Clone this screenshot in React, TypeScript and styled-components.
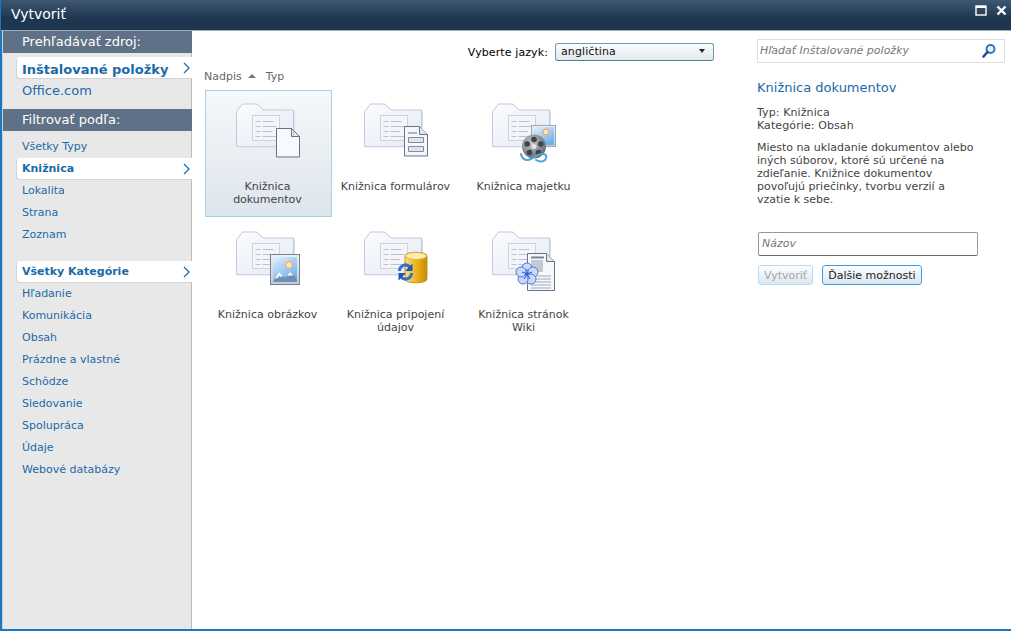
import React from "react";
import styled, { createGlobalStyle } from "styled-components";

const GlobalStyle = createGlobalStyle`
  html, body {
    margin: 0;
    padding: 0;
    height: 100%;
    overflow: hidden;
    background: #fff;
    font-family: "DejaVu Sans", Verdana, sans-serif;
    font-size: 11px;
  }
`;

type OverlayKind = "document" | "form" | "asset" | "picture" | "data" | "wiki";

interface Template {
  name: string[];
  overlay: OverlayKind;
  selected?: boolean;
}

const templates: Template[] = [
  { name: ["Knižnica", "dokumentov"], overlay: "document", selected: true },
  { name: ["Knižnica formulárov"], overlay: "form" },
  { name: ["Knižnica majetku"], overlay: "asset" },
  { name: ["Knižnica obrázkov"], overlay: "picture" },
  { name: ["Knižnica pripojení", "údajov"], overlay: "data" },
  { name: ["Knižnica stránok", "Wiki"], overlay: "wiki" },
];

const typeFilters = ["Lokalita", "Strana", "Zoznam"];
const categories = [
  "Hľadanie",
  "Komunikácia",
  "Obsah",
  "Prázdne a vlastné",
  "Schôdze",
  "Sledovanie",
  "Spolupráca",
  "Údaje",
  "Webové databázy",
];

const Defs = () => (
  <svg width="0" height="0" style={{ position: "absolute" }}>
    <defs>
      <linearGradient id="folderFill" x1="0" y1="0" x2="1" y2="1">
        <stop offset="0" stopColor="#fbfcfe" />
        <stop offset="1" stopColor="#e3e9f6" />
      </linearGradient>
      <linearGradient id="skyFill" x1="0" y1="0" x2="0.6" y2="1">
        <stop offset="0" stopColor="#e3f1fc" />
        <stop offset="1" stopColor="#6fb0ec" />
      </linearGradient>
      <linearGradient id="frameFill" x1="0" y1="0" x2="0" y2="1">
        <stop offset="0" stopColor="#eef1f5" />
        <stop offset="1" stopColor="#c3ccd6" />
      </linearGradient>
      <linearGradient id="goldFill" x1="0" y1="0" x2="1" y2="0">
        <stop offset="0" stopColor="#fce27a" />
        <stop offset="0.55" stopColor="#ecb017" />
        <stop offset="1" stopColor="#c48b0a" />
      </linearGradient>
      <radialGradient id="reelFill" cx="0.4" cy="0.35" r="0.7">
        <stop offset="0" stopColor="#c4c7ca" />
        <stop offset="1" stopColor="#63676b" />
      </radialGradient>
    </defs>
  </svg>
);

const PaperLines = ({ x, y }: { x: number; y: number }) => (
  <g stroke="#b9c3d0" strokeWidth="1">
    <path d={`M${x} ${y}h5M${x} ${y + 5}h5M${x} ${y + 10}h5M${x} ${y + 15}h5`} />
    <path d={`M${x + 7} ${y}h11M${x + 7} ${y + 5}h14M${x + 7} ${y + 10}h9M${x + 7} ${y + 15}h14`} />
  </g>
);

const Overlay = ({ kind }: { kind: OverlayKind }) => {
  switch (kind) {
    case "document":
      return (
        <path
          d="M40.5 25.5h15l8 8v20.5h-23z M55.5 25.5v8h8"
          fill="#f7f9fc"
          stroke="#62758a"
          strokeLinejoin="round"
        />
      );
    case "form":
      return (
        <g>
          <path d="M40.5 23.5h15l8 8v21.5h-23z" fill="#f4f6f9" stroke="#62758a" />
          <path d="M55.5 23.5v8h8" fill="#dfe5ec" stroke="#62758a" />
          <path d="M44 30h9" stroke="#62758a" />
          <path d="M44.5 34.5h15v5h-15zM44.5 43.5h15v5h-15z" fill="#dfe4ea" stroke="#7c8ea2" />
        </g>
      );
    case "asset":
      return (
        <g>
          <rect x="39.5" y="22.5" width="24" height="21" fill="url(#frameFill)" stroke="#9aa9ba" />
          <rect x="41" y="24" width="21" height="18" fill="url(#skyFill)" />
          <circle cx="54" cy="29" r="3" fill="#fbe3bd" stroke="#ee9a5b" />
          <circle cx="42" cy="43.5" r="12" fill="url(#reelFill)" />
          <circle cx="42" cy="43.5" r="2.5" fill="#e2e4e6" />
          <g fill="#3f4347">
            <circle cx="42" cy="36.5" r="2.8" />
            <circle cx="48.8" cy="41" r="2.8" />
            <circle cx="46.5" cy="49.5" r="2.8" />
            <circle cx="37.5" cy="49.5" r="2.8" />
            <circle cx="35.2" cy="41" r="2.8" />
          </g>
          <path
            d="M29 51c1 6 6 7 10 5s8-6 12-5c4 0 4 4 2 6s-6 2-9 0"
            fill="none"
            stroke="#4ea3d8"
            strokeWidth="2"
            strokeLinecap="round"
          />
        </g>
      );
    case "picture":
      return (
        <g>
          <rect x="34.5" y="23.5" width="29" height="30" fill="url(#frameFill)" stroke="#6f8195" />
          <rect x="37" y="26" width="24" height="25" fill="url(#skyFill)" />
          <circle cx="53" cy="34" r="3.5" fill="#fbe3bd" stroke="#ef9d5f" />
          <path d="M37 51l6-10 6 6 5-6 7 7v3z" fill="#6f8fb4" />
          <path d="M39 47.5l4-6.5 4 4-2 1-2-1-1 2zM51 44.5l3-3.500 3 3-2 1-1-1-1 1z" fill="#f4f7fb" />
        </g>
      );
    case "data":
      return (
        <g>
          <path d="M41 25c0-5 22-5 22 0v23c0 5-22 5-22 0z" fill="url(#goldFill)" stroke="#c2952a" />
          <ellipse cx="52" cy="25" rx="10.500" ry="3.500" fill="#fdeeb0" stroke="#e0b23a" />
          <g fill="none" stroke="#2f6fd0" strokeWidth="3">
            <path d="M35.500 40a6 6 0 0 1 10.500-4" />
            <path d="M47.500 42a6 6 0 0 1-10.500 4" />
          </g>
          <path d="M48.500 32.500v7.500h-7.500zM34.500 49.500v-7.500h7.500z" fill="#1f57b4" />
        </g>
      );
    case "wiki":
      return (
        <g>
          <path d="M35.5 22.5h19l8 8v29h-27z" fill="#f6f8fb" stroke="#62758a" />
          <path d="M54.5 22.5v8h8" fill="#dfe5ec" stroke="#62758a" />
          <path d="M39 26.5h13" stroke="#75879a" strokeWidth="2" />
          <rect x="39" y="29" width="12" height="12" fill="#c4cad1" />
          <path d="M44 45h15M44 48h15M39 51h20M39 54h20M39 57h20" stroke="#9aa8b8" />
          <g fill="#c9daf9" stroke="#4a78de" strokeWidth="1">
            <circle cx="35" cy="37" r="5" />
            <circle cx="41" cy="41" r="5" />
            <circle cx="39" cy="48" r="5" />
            <circle cx="31" cy="48" r="5" />
            <circle cx="29" cy="41" r="5" />
          </g>
          <path d="M35 38v5M40 41l-5 2M38 48l-3-5M32 48l3-5M30 41l5 2" stroke="#2a58c8" />
        </g>
      );
  }
};

const LibraryIcon = ({ kind }: { kind: OverlayKind }) => (
  <IconSvg width="64" height="64" viewBox="0 0 64 64">
    <path
      d="M0.5 8.500l6-7.500h14.500l6 6h30.500v36.500h-57z"
      fill="url(#folderFill)"
      stroke="#c2c9d6"
    />
    <path d="M58.500 8v36H2" fill="none" stroke="#dde1e8" />
    <rect x="16.5" y="12.5" width="27" height="25" fill="#f3f5f9" stroke="#ccd3dd" />
    <PaperLines x={19.5} y={18.5} />
    <Overlay kind={kind} />
  </IconSvg>
);

const App: React.FC = () => (
  <>
    <GlobalStyle />
    <Defs />
    <Dialog>
      <TitleBar>
        <Title>Vytvoriť</Title>
        <WindowControls>
          <svg width="13" height="12" viewBox="0 0 13 12">
            <rect x="1" y="1" width="10" height="9" fill="none" stroke="#fff" strokeWidth="1.4" />
            <path d="M1 2h10" stroke="#fff" strokeWidth="2" />
          </svg>
          <svg width="11" height="11" viewBox="0 0 11 11">
            <path d="M1.5 1.5l8 8M9.5 1.5l-8 8" stroke="#fff" strokeWidth="2.4" />
          </svg>
        </WindowControls>
      </TitleBar>
      <Body>
        <Sidebar>
          <SectionHeading>Prehľadávať zdroj:</SectionHeading>
          <SourceList>
            <SourceItem $active>
              Inštalované položky
              <Chevron />
            </SourceItem>
            <SourceItem>Office.com</SourceItem>
          </SourceList>
          <SectionHeading>Filtrovať podľa:</SectionHeading>
          <FilterList>
            <FilterItem>Všetky Typy</FilterItem>
            <FilterItem $active>
              Knižnica
              <Chevron />
            </FilterItem>
            {typeFilters.map((f) => (
              <FilterItem key={f}>{f}</FilterItem>
            ))}
          </FilterList>
          <FilterList $second>
            <FilterItem $active>
              Všetky Kategórie
              <Chevron />
            </FilterItem>
            {categories.map((c) => (
              <FilterItem key={c}>{c}</FilterItem>
            ))}
          </FilterList>
        </Sidebar>

        <Main>
          <LanguageRow>
            Vyberte jazyk:
            <LanguageSelect>
              angličtina
              <SelectArrow />
            </LanguageSelect>
          </LanguageRow>
          <SortRow>
            <span>Nadpis</span>
            <SortArrow />
            <span>Typ</span>
          </SortRow>
          <TileGrid>
            {templates.map((t) => (
              <Tile key={t.overlay} $selected={t.selected}>
                <LibraryIcon kind={t.overlay} />
                <TileLabel>
                  {t.name.map((line) => (
                    <div key={line}>{line}</div>
                  ))}
                </TileLabel>
              </Tile>
            ))}
          </TileGrid>
        </Main>

        <Details>
          <SearchBox>
            <SearchInput placeholder="Hľadať Inštalované položky" />
            <svg width="16" height="16" viewBox="0 0 16 16">
              <circle cx="9.5" cy="6" r="4" fill="#e8f2fb" stroke="#2f76bd" strokeWidth="2" />
              <path d="M6.5 9l-4 4.5" stroke="#1d4f8d" strokeWidth="2.6" strokeLinecap="round" />
            </svg>
          </SearchBox>
          <DetailTitle>Knižnica dokumentov</DetailTitle>
          <MetaLine>Typ: Knižnica</MetaLine>
          <MetaLine>Kategórie: Obsah</MetaLine>
          <Description>
            Miesto na ukladanie dokumentov alebo
            <br />
            iných súborov, ktoré sú určené na
            <br />
            zdieľanie. Knižnice dokumentov
            <br />
            povoľujú priečinky, tvorbu verzií a
            <br />
            vzatie k sebe.
          </Description>
          <NameInput placeholder="Názov" />
          <ButtonRow>
            <ActionButton disabled>Vytvoriť</ActionButton>
            <ActionButton>Ďalšie možnosti</ActionButton>
          </ButtonRow>
        </Details>
      </Body>
    </Dialog>
  </>
);

const Chevron = () => (
  <ChevronIcon width="7" height="12" viewBox="0 0 7 12">
    <path d="M1 1l5 5-5 5" fill="none" stroke="#1f6fae" strokeWidth="1.3" />
  </ChevronIcon>
);

const Dialog = styled.div`
  display: flex;
  flex-direction: column;
  height: 631px;
  box-sizing: border-box;
  border-left: 2px solid #1b78c0;
  border-bottom: 2px solid #1b78c0;
`;
const TitleBar = styled.div`
  display: flex;
  align-items: center;
  justify-content: space-between;
  flex: 0 0 31px;
  box-sizing: border-box;
  margin-left: -1px;
  padding: 0 4px 2px 10px;
  background: linear-gradient(#3f5872, #1f3650 60%, #1e354e);
  border-bottom: 1px solid #9fb0bd;
`;
const Title = styled.div`
  color: #fff;
  font-size: 14px;
`;
const WindowControls = styled.div`
  display: flex;
  align-items: center;
  gap: 8px;
  margin-bottom: 7px;
`;
const Body = styled.div`
  display: flex;
  flex: 1;
  min-height: 0;
`;
const Sidebar = styled.div`
  flex: 0 0 190px;
  box-sizing: border-box;
  border-left: 1px solid #cfcfcf;
  border-right: 1px solid #bcbcbc;
  background: #e8e8e8;
`;
const SectionHeading = styled.div`
  height: 22px;
  line-height: 22px;
  padding-left: 19px;
  margin-right: -1px;
  background: #5f7186;
  color: #fff;
  font-size: 13px;
`;
const SourceList = styled.div`
  padding: 4px 0 10px;
`;
const SourceItem = styled.div<{ $active?: boolean }>`
  position: relative;
  height: 21px;
  line-height: 25px;
  margin-left: 14px;
  padding-left: 5px;
  margin-right: -1px;
  font-size: 13px;
  color: #1a6aa8;
  font-weight: ${(p) => (p.$active ? 700 : 400)};
  background: ${(p) => (p.$active ? "#fff" : "transparent")};
  border-radius: 3px 0 0 3px;
  box-shadow: ${(p) => (p.$active ? "-1px 1px 0 #d4d4d4" : "none")};
`;
const FilterList = styled.div<{ $second?: boolean }>`
  padding-top: ${(p) => (p.$second ? "15px" : "5px")};
`;
const FilterItem = styled.div<{ $active?: boolean }>`
  position: relative;
  height: ${(p) => (p.$active ? "21px" : "22px")};
  line-height: ${(p) => (p.$active ? "21px" : "22px")};
  margin-left: 14px;
  margin-right: -1px;
  margin-bottom: ${(p) => (p.$active ? "1px" : "0")};
  padding-left: 5px;
  color: #1a6aa8;
  font-weight: ${(p) => (p.$active ? 700 : 400)};
  background: ${(p) => (p.$active ? "#fff" : "transparent")};
  border-radius: 3px 0 0 3px;
  box-shadow: ${(p) => (p.$active ? "-1px 1px 0 #d4d4d4" : "none")};
`;
const ChevronIcon = styled.svg`
  position: absolute;
  right: 2px;
  top: 5px;
`;
const Main = styled.div`
  flex: 0 0 554px;
  box-sizing: border-box;
  padding: 12px 0 0 13px;
  color: #333;
`;
const LanguageRow = styled.div`
  display: flex;
  align-items: center;
  justify-content: flex-end;
  gap: 7px;
  height: 18px;
  padding-right: 32px;
  color: #000;
  letter-spacing: 0.1px;
`;
const LanguageSelect = styled.div`
  position: relative;
  box-sizing: border-box;
  width: 159px;
  height: 18px;
  line-height: 15px;
  padding-left: 5px;
  color: #111;
  border: 1px solid #6f99ad;
  border-bottom-color: #4f8296;
  border-radius: 3px;
  background: linear-gradient(#fbfcfd, #e2e8ed);
`;
const SelectArrow = styled.span`
  position: absolute;
  right: 8px;
  top: 5px;
  border-left: 3.5px solid transparent;
  border-right: 3.5px solid transparent;
  border-top: 4px solid #222;
`;
const SortRow = styled.div`
  display: flex;
  align-items: center;
  height: 13px;
  margin: 9px 0 0 -1px;
  color: #666;
`;
const SortArrow = styled.span`
  margin: 0 10px 2px 6px;
  border-left: 4px solid transparent;
  border-right: 4px solid transparent;
  border-bottom: 4px solid #777;
`;
const TileGrid = styled.div`
  display: grid;
  grid-template-columns: repeat(3, 128px);
  grid-auto-rows: 128px;
  margin-top: 7px;
`;
const Tile = styled.div<{ $selected?: boolean }>`
  display: flex;
  flex-direction: column;
  align-items: center;
  box-sizing: border-box;
  width: 127px;
  height: 127px;
  padding: 12px 2px 0 0;
  border: 1px solid ${(p) => (p.$selected ? "#a9cfe4" : "transparent")};
  background: ${(p) => (p.$selected ? "linear-gradient(#f6f8fa, #dde5ec)" : "transparent")};
`;
const IconSvg = styled.svg`
  flex: 0 0 64px;
`;
const TileLabel = styled.div`
  margin-top: 13px;
  line-height: 13px;
  text-align: center;
  color: #444;
  white-space: nowrap;
`;
const Details = styled.div`
  flex: 1;
  box-sizing: border-box;
  padding: 8px 6px 0 11px;
  color: #444;
`;
const SearchBox = styled.div`
  display: flex;
  align-items: center;
  box-sizing: border-box;
  height: 24px;
  padding-right: 7px;
  border: 1px solid #e0e0e0;
`;
const SearchInput = styled.input`
  flex: 1;
  min-width: 0;
  border: 0;
  outline: 0;
  padding: 0 2px 2px;
  background: transparent;
  font: italic 11px "DejaVu Sans", Verdana, sans-serif;
  &::placeholder {
    color: #777;
    opacity: 1;
  }
`;
const DetailTitle = styled.div`
  margin-top: 17px;
  font-size: 13px;
  line-height: 16px;
  color: #1a6aa8;
`;
const MetaLine = styled.div`
  line-height: 13px;
  letter-spacing: 0.1px;
  &:nth-of-type(3) {
    margin-top: 10px;
  }
`;
const Description = styled.div`
  margin-top: 9px;
  line-height: 13px;
`;
const NameInput = styled.input`
  display: block;
  box-sizing: border-box;
  width: 220px;
  height: 24px;
  margin: 26px 0 0 1px;
  padding: 0 3px 1px;
  border: 1px solid #8c9aa8;
  border-bottom-color: #5f6b78;
  border-radius: 2px;
  outline: 0;
  font: italic 11px "DejaVu Sans", Verdana, sans-serif;
  &::placeholder {
    color: #777;
    opacity: 1;
  }
`;
const ButtonRow = styled.div`
  display: flex;
  gap: 9px;
  margin: 9px 0 0 1px;
`;
const ActionButton = styled.button`
  box-sizing: border-box;
  height: 20px;
  padding: 0 5px;
  border: 1px solid #3c9ce8;
  border-radius: 3px;
  background: linear-gradient(#ffffff, #d8e6f1);
  color: #222;
  font: 11px "DejaVu Sans", Verdana, sans-serif;
  &:disabled {
    border-color: #b5dcf6;
    color: #a5a5a5;
  }
`;

export default App;
